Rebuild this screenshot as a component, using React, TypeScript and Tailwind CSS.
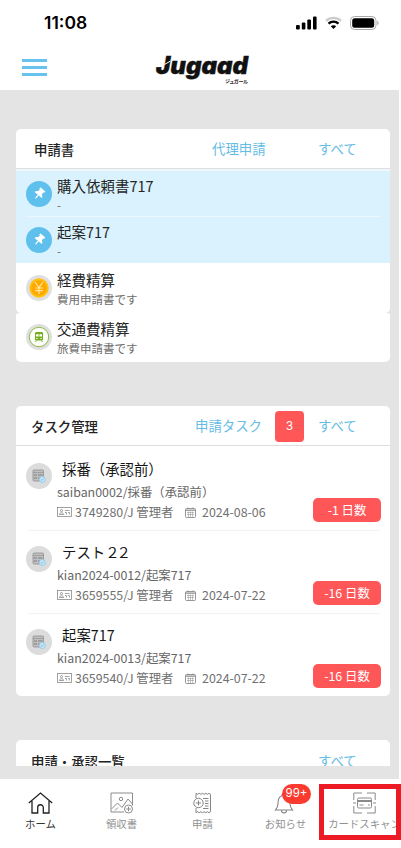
import React from "react";

const Pin = () => (
  <span className="flex size-[26px] shrink-0 items-center justify-center rounded-full bg-[#5fc0ee]">
    <svg width="14" height="14" viewBox="0 0 14 14">
      <g transform="rotate(40 7 7)" fill="#fff">
        <path d="M3.800 1h6.400v1.600l-1 .5.3 2.500c1.400.4 2.100 1.400 2.200 2.700H2.300c.1-1.300.8-2.300 2.200-2.700l.3-2.500-1-.5z" />
        <path d="M6.400 8h1.200v3.600l-.6 1.600-.6-1.600z" />
      </g>
    </svg>
  </span>
);

const Coin = () => (
  <svg className="size-[26px] shrink-0" viewBox="0 0 26 26">
    <circle cx="13" cy="13" r="13" fill="#dfdfe0" />
    <circle cx="13" cy="13" r="9.700" fill="#ffc20e" />
    <circle cx="13" cy="13" r="7.800" fill="#ffa800" />
    <path d="M9 7 13 12.500 17 7M13 12.500V19M9.200 13h7.600M9.200 15.700h7.600" fill="none" stroke="#ffe9a0" strokeWidth="1.200" />
  </svg>
);

const Train = () => (
  <svg className="size-[26px] shrink-0" viewBox="0 0 26 26">
    <circle cx="13" cy="13" r="13" fill="#dfdfe0" />
    <circle cx="13" cy="13" r="9.700" fill="#fff" stroke="#8fbc45" strokeWidth="1" />
    <rect x="9" y="8" width="8" height="8.500" rx="1.300" fill="#74b01c" />
    <path d="M10 10.200h2.600v2.300H10zM13.400 10.200H16v2.300h-2.600zM10.300 14h1.300v1h-1.300zM14.400 14h1.300v1h-1.300z" fill="#fff" />
    <path d="M10.500 16.500 9.500 18M15.500 16.500l1 1.500" stroke="#74b01c" strokeWidth="1" />
  </svg>
);

const TaskIcon = () => (
  <svg className="size-[26px] shrink-0" viewBox="0 0 26 26">
    <circle cx="13" cy="13" r="13" fill="#dcdcdc" />
    <rect x="7" y="7" width="10.500" height="11" rx="1" fill="#c0c0c0" stroke="#8e8e8e" strokeWidth=".8" />
    <path d="M7 9.500h10.500" stroke="#929292" strokeWidth=".7" />
    <path d="M8 12h3M12 12h4.500M8 15h3M12 15h2" stroke="#777" strokeWidth=".9" />
    <circle cx="16.300" cy="16.500" r="3" fill="#c7e5f5" stroke="#8dccf0" strokeWidth=".9" />
    <path d="m14.900 16.500 1.100 1 1.700-2" fill="none" stroke="#6ebee9" strokeWidth=".8" />
  </svg>
);

const IdCard = () => (
  <svg className="h-[10px] w-[15px] shrink-0" viewBox="0 0 15 10" fill="none" stroke="#8a8a8a" strokeWidth=".8">
    <rect x=".5" y=".5" width="14" height="9" />
    <circle cx="4.500" cy="3.600" r="1.100" />
    <path d="M2.300 7.500c.2-2.300 4.200-2.300 4.400 0zM8 3.500h4.500M8 5.500h1.500v2M11 5.500h1.500v2" />
  </svg>
);

const Calendar = () => (
  <svg className="h-[11px] w-[11px] shrink-0" viewBox="0 0 11 11" fill="none" stroke="#8a8a8a">
    <rect x=".5" y="1.500" width="10" height="9" rx="1" strokeWidth=".9" />
    <path d="M.5 3.200h10" strokeWidth="1.200" />
    <path d="M3 0v2M8 0v2M2 5.500h7M2 7.500h7M3.400 4.500v5.500M5.500 4.500v5.500M7.600 4.500v5.500" strokeWidth=".5" />
  </svg>
);

const StatusBar = () => (
  <div className="flex h-[46px] items-center pl-[44px] pr-[22px]">
    <span className="font-['Inter',sans-serif] text-[17.500px] font-semibold leading-none text-black">11:08</span>
    <div className="ml-auto flex items-center">
      <svg className="h-[14px] w-[21px]" viewBox="0 0 21 14" fill="#000">
        <rect x="0" y="9" width="3.800" height="4.500" rx="1" />
        <rect x="5.800" y="6.500" width="3.600" height="7" rx="1" />
        <rect x="11.300" y="3.500" width="3.700" height="10" rx="1" />
        <rect x="17" y=".5" width="3.600" height="13" rx="1" />
      </svg>
      <svg className="ml-[8px] h-[14px] w-[17px]" viewBox="0 0 17 14" fill="none" strokeWidth="2.300">
        <path d="M1 4.800c4.200-4 10.800-4 15 0" stroke="#ccc" />
        <path d="M3.500 7.700c2.800-2.700 7.200-2.700 10 0" stroke="#000" />
        <path d="M5.800 10.200c1.500-1.400 3.900-1.400 5.400 0L8.500 13z" fill="#000" />
      </svg>
      <svg className="ml-[8px] h-[14px] w-[29px]" viewBox="0 0 29 14">
        <rect x=".5" y=".5" width="25.500" height="13" rx="4" fill="none" stroke="#aaa" />
        <rect x="2.200" y="2.200" width="22" height="9.600" rx="2.500" fill="#000" />
        <path d="M27.300 4.800c1.800.7 1.800 3.700 0 4.400z" fill="#aaa" />
      </svg>
    </div>
  </div>
);

const TopBar = () => (
  <div className="flex h-[44px] items-start pl-[22px]">
    <div className="mt-[13px] flex w-[25px] flex-col gap-[4px]">
      <i className="h-[3px] bg-[#67c2ee]" />
      <i className="h-[3px] bg-[#67c2ee]" />
      <i className="h-[3px] bg-[#67c2ee]" />
    </div>
    <svg className="ml-[106px] mt-[6px] h-[36px] w-[100px] font-['Inter',sans-serif] [font-feature-settings:'cv11','ss03']" viewBox="0 0 100 36">
      <text x="3" y="22" textLength="92" lengthAdjust="spacingAndGlyphs" fontSize="24" fontWeight="900" fontStyle="italic" fill="#111" stroke="#111" strokeWidth=".4">Jugaad</text>
      <path d="m11.500 12.500 6-3.500" stroke="#fff" strokeWidth="1" />
      <text x="72" y="31" textLength="23" fontFamily="Noto Sans CJK JP, sans-serif" fontSize="5" fontWeight="700" fill="#222">ジュガール</text>
    </svg>
  </div>
);

const link = "text-[13.400px] text-[#65bce4]";

type FormProps = { icon: React.ReactNode; title: string; sub: string; className: string };
const FormRow = ({ icon, title, sub, className }: FormProps) => (
  <div className={"flex pl-[10px] " + className}>
    {icon}
    <div className="-mt-[5px] ml-[5px]">
      <div className="h-[21px] text-[14.500px] leading-[20px] text-[#252525]">{title}</div>
      <div className="h-[17px] text-[11.500px] leading-[17px] text-[#6d6d6d]">{sub}</div>
    </div>
  </div>
);

const tasks = [
  { title: "採番（承認前）", sub: "saiban0002/採番（承認前）", who: "3749280/J 管理者", date: "2024-08-06", days: "-1 日数" },
  { title: <>テスト<span className="tracking-[-3px]">２２</span></>, sub: "kian2024-0012/起案717", who: "3659555/J 管理者", date: "2024-07-22", days: "-16 日数" },
  { title: "起案717", sub: "kian2024-0013/起案717", who: "3659540/J 管理者", date: "2024-07-22", days: "-16 日数" },
];

const TaskRow = ({ t, last }: { t: (typeof tasks)[number]; last: boolean }) => (
  <div className={"ml-[12px] mr-[10px] flex h-[83px] shrink-0 border-b " + (last ? "border-transparent" : "border-[#f3f3f3]")}>
    <div className="-ml-[2px] pt-[15px]"><TaskIcon /></div>
    <div className="-mr-px ml-[5px] flex-1 pt-[9px]">
      <div className="h-[24px] pl-[5px] text-[14.400px] leading-[24px] text-[#151515]">{t.title}</div>
      <div className="h-[20px] text-[12.400px] leading-[22px] text-[#666]">{t.sub}</div>
      <div className="flex h-[22px] items-center whitespace-nowrap text-[12.400px] leading-[22px] text-[#707070]">
        <IdCard />
        <span className="ml-[3px] w-[110px]">{t.who}</span>
        <Calendar />
        <span className="ml-[6px]">{t.date}</span>
        <span className="-mt-[4px] ml-auto flex h-[24px] w-[68px] items-center justify-center rounded-[5px] bg-[#ff5658] text-[12.400px] text-white">{t.days}</span>
      </div>
    </div>
  </div>
);

const HomeIcon = () => (
  <svg className="h-[22px] w-[25px]" viewBox="0 0 25 22" fill="none" stroke="#222" strokeWidth="1.300">
    <path d="M.8 11 12.500 1l11.700 10M4 9v12h5.700v-5.500c0-3.700 5.600-3.700 5.600 0V21H21V9" />
  </svg>
);
const PhotoIcon = () => (
  <svg className="h-[22px] w-[24px]" viewBox="0 0 24 22" fill="none" stroke="#8c8c8c" strokeWidth="1">
    <path d="M14 20H1V1h21.500v12.500" />
    <circle cx="11" cy="7" r="1.700" />
    <path d="m1.500 17 6-6 4.500 4.500L18 7l4.500 5M8 15.500l-3 3" />
    <circle cx="18.500" cy="17" r="4" />
    <path d="M18.500 14.700v4.600M16.200 17h4.600" />
  </svg>
);
const ReceiptIcon = () => (
  <svg className="h-[22px] w-[20px]" viewBox="0 0 20 22" fill="none" stroke="#858585" strokeWidth="1">
    <path d="M3 6V1.300l1.600 1 1.600-1 1.700 1 1.600-1 1.600 1 1.700-1 1.600 1 1.600-1 1.500 1v17.400l-1.500 1-1.600-1-1.600 1-1.700-1-1.600 1-1.600-1-1.700 1-1.600-1-1.600 1V16" />
    <circle cx="5.500" cy="11" r="4.700" />
    <path d="M5.500 8.500v5M3 11h5M10 6.500h5.500M12 9h3.500M12 11.500h3.500M12 14h3.500M10 16.500h5.500" />
  </svg>
);
const BellIcon = () => (
  <svg className="-ml-[3px] h-[22px] w-[20px]" viewBox="0 0 20 22" fill="none" stroke="#858585" strokeWidth="1.100">
    <path d="M1.500 18c3-3 2.300-5.500 2.700-9C4.700 5.500 7 3.500 10 3.500s5.300 2 5.700 5.500c.4 3.500-.2 6 2.800 9zM8 3.500C8 .5 12 .5 12 3.500M7.500 18.500c0 3.200 5 3.200 5 0" />
  </svg>
);
const ScanIcon = () => (
  <svg className="h-[22px] w-[23px]" viewBox="0 0 23 22" fill="none" stroke="#8a8a8a" strokeWidth="1">
    <path d="M.8 8V1H9M14 1h8.200v7M22.200 14v7H14M9 21H.8v-7M0 11h3M20 11h3" />
    <rect x="4.500" y="6" width="14" height="10" rx="1.300" />
    <path d="M4.500 9h14" strokeWidth="2" />
    <path d="M6.500 13h4M15 13h1.800" />
  </svg>
);

const Tab = ({ icon, label, className }: { icon: React.ReactNode; label: string; className: string }) => (
  <div className={"flex shrink-0 flex-col items-center whitespace-nowrap pt-[13px] text-[10.400px] leading-[20px] " + className}>
    {icon}
    <span>{label}</span>
  </div>
);

export default function App() {
  return (
    <div className="relative h-[848px] w-[401px] overflow-hidden bg-white font-['Noto_Sans_CJK_JP',sans-serif]">
      <StatusBar />
      <TopBar />
      <main className="flex h-[689px] w-[399px] flex-col bg-[#e4e4e4] pl-[16px] pr-[9px]">
        <section className="mt-[39px] h-[233px] shrink-0 overflow-hidden rounded-[5px] bg-[#e4e4e4]">
          <div className="flex h-[40px] items-center border-b border-[#dcdfe1] bg-white pl-[18px]">
            <span className="w-[178px] pt-[2px] text-[13.400px] font-medium text-[#222]">申請書</span>
            <span className={"w-[106px] " + link}>代理申請</span>
            <span className={link}>すべて</span>
          </div>
          <div className="h-[94px] border-t-2 border-[#f0f7fa] bg-[#d9f2fd]">
            <FormRow icon={<Pin />} title="購入依頼書717" sub="-" className="h-[45px] pt-[10px]" />
            <div className="ml-[10px] mr-[10px] h-px bg-[#edf7fb]" />
            <FormRow icon={<Pin />} title="起案717" sub="-" className="h-[46px] pt-[10px]" />
          </div>
          <FormRow icon={<Coin />} title="経費精算" sub="費用申請書です" className="h-[50px] rounded-b-[5px] bg-white pt-[12px]" />
          <FormRow icon={<Train />} title="交通費精算" sub="旅費申請書です" className="h-[49px] rounded-t-[3px] bg-white pt-[11px]" />
        </section>

        <section className="mt-[44px] h-[290px] shrink-0 overflow-hidden rounded-[5px] bg-white">
          <div className="flex h-[40px] items-center border-b border-[#dedede] pl-[15px]">
            <span className="w-[164px] pt-[2px] text-[13.400px] font-medium text-[#222]">タスク管理</span>
            <span className={"w-[80px] " + link}>申請タスク</span>
            <span className="mr-[14px] mt-[1px] flex h-[31px] w-[29px] items-center justify-center rounded-[4px] bg-[#ff5658] font-['Inter',sans-serif] text-[12px] text-white">3</span>
            <span className={link}>すべて</span>
          </div>
          <div className="flex flex-col pt-[2px]">
            {tasks.map((t, i) => <TaskRow key={t.who} t={t} last={i === 2} />)}
          </div>
        </section>

        <section className="mt-[44px] h-[26px] shrink-0 overflow-hidden rounded-t-[5px] bg-white">
          <div className="flex h-[40px] items-center pl-[15px]">
            <span className="w-[287px] pt-[2px] text-[13.400px] font-medium text-[#222]">申請・承認一覧</span>
            <span className={link}>すべて</span>
          </div>
        </section>
      </main>

      <nav className="flex h-[69px] w-[401px] overflow-hidden bg-white text-[#929292]">
        <Tab icon={<HomeIcon />} label="ホーム" className="w-[81px] text-[#333]" />
        <Tab icon={<PhotoIcon />} label="領収書" className="w-[81px]" />
        <Tab icon={<ReceiptIcon />} label="申請" className="w-[81px]" />
        <Tab icon={<BellIcon />} label="お知らせ" className="w-[85px]" />
        <Tab icon={<ScanIcon />} label="カードスキャン" className="w-[73px]" />
      </nav>
      <span className="absolute left-[282px] top-[784px] flex h-[20px] w-[29px] items-center justify-center rounded-full bg-[#fb3b30] font-['Inter',sans-serif] text-[11.500px] text-white">99+</span>
      <div className="absolute left-[319px] top-[784px] h-[56px] w-[82px] border-[5px] border-[#ed1c24]" />
    </div>
  );
}
